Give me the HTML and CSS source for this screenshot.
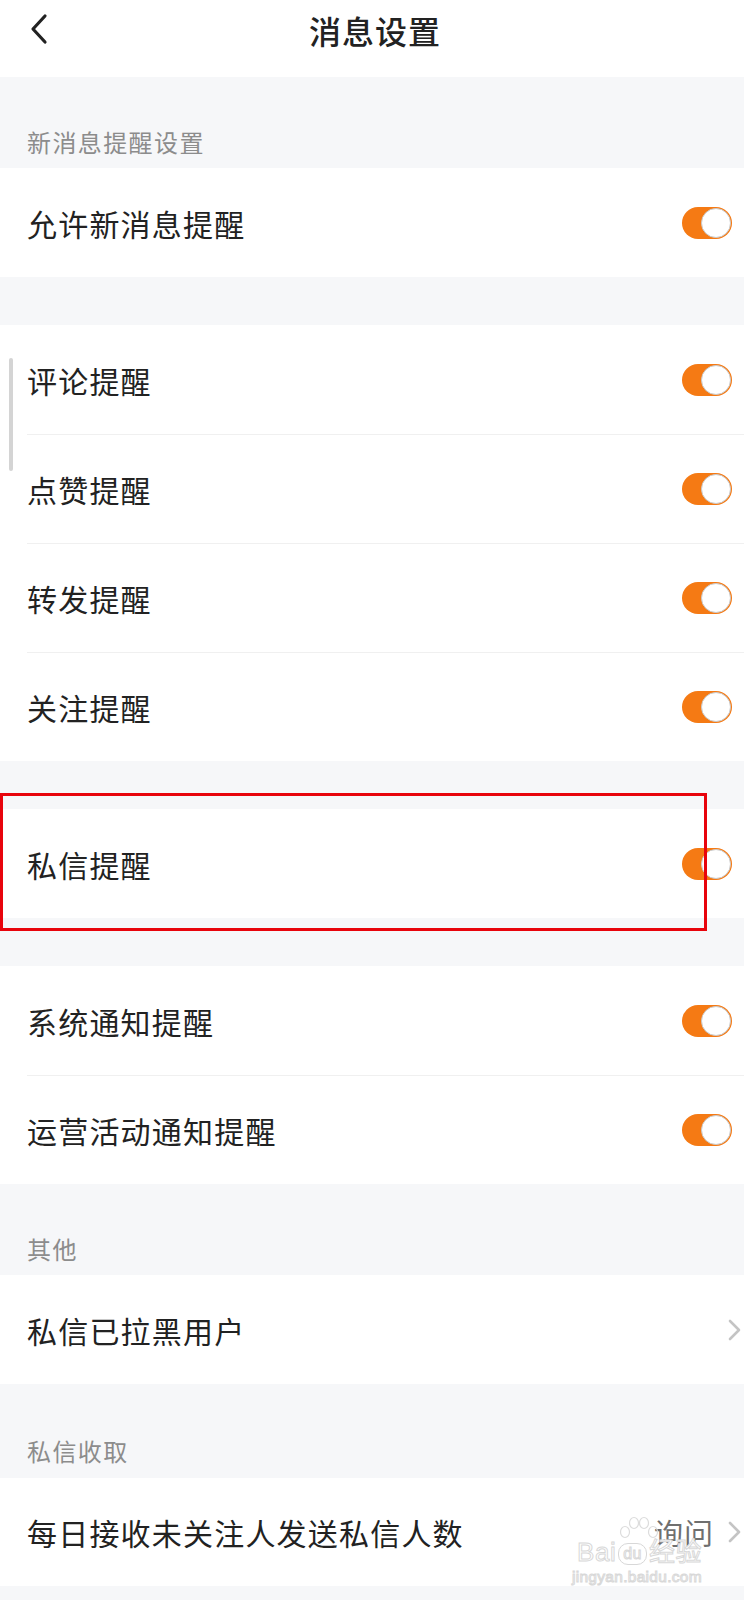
FILE: index.html
```html
<!DOCTYPE html>
<html lang="zh-CN">

<head>
    <meta charset="UTF-8">
    <meta name="viewport" content="width=device-width, initial-scale=1.0">
    <title>消息设置</title>
    <link rel="stylesheet" href="styles.css">
</head>

<body>

    <div class="topbar">
        <a class="back" href="#">
            <svg width="20" height="32" viewBox="0 0 20 32">
                <path d="M16 3 L4 16 L16 29" fill="none" stroke="#222" stroke-width="3.2" stroke-linecap="round" stroke-linejoin="round" />
            </svg>
        </a>
        <h1>消息设置</h1>
    </div>

    <div class="section-label">新消息提醒设置</div>
    <div class="group">
        <div class="row">
            <span>允许新消息提醒</span>
            <span class="switch on"></span>
        </div>
    </div>

    <div class="gap"></div>

    <div class="group">
        <div class="scroll-thumb"></div>
        <div class="row">
            <span>评论提醒</span>
            <span class="switch on"></span>
        </div>
        <div class="row">
            <span>点赞提醒</span>
            <span class="switch on"></span>
        </div>
        <div class="row">
            <span>转发提醒</span>
            <span class="switch on"></span>
        </div>
        <div class="row">
            <span>关注提醒</span>
            <span class="switch on"></span>
        </div>
    </div>

    <div class="gap"></div>

    <div class="group">
        <div class="row">
            <span>私信提醒</span>
            <span class="switch on"></span>
            <div class="mark-box"></div>
        </div>
    </div>

    <div class="gap"></div>

    <div class="group">
        <div class="row">
            <span>系统通知提醒</span>
            <span class="switch on"></span>
        </div>
        <div class="row">
            <span>运营活动通知提醒</span>
            <span class="switch on"></span>
        </div>
    </div>

    <div class="section-label">其他</div>
    <div class="group">
        <div class="row">
            <span>私信已拉黑用户</span>
            <svg class="arrow" width="13" height="22" viewBox="0 0 13 22">
                <path d="M2 2 L11 11 L2 20" fill="none" stroke="#c4c4c4" stroke-width="2.6" stroke-linecap="round" stroke-linejoin="round" />
            </svg>
        </div>
    </div>

    <div class="section-label last">私信收取</div>
    <div class="group">
        <div class="row tall">
            <span>每日接收未关注人发送私信人数</span>
            <span class="value">询问
                <svg class="arrow" width="13" height="22" viewBox="0 0 13 22">
                    <path d="M2 2 L11 11 L2 20" fill="none" stroke="#c4c4c4" stroke-width="2.6" stroke-linecap="round" stroke-linejoin="round" />
                </svg>
            </span>
        </div>

        <div class="watermark">
            <svg class="wm-paw" width="42" height="24" viewBox="0 0 42 24">
                <ellipse cx="7" cy="16" rx="4.5" ry="5.5" fill="none" stroke="#dcdcdc" stroke-width="1.2" />
                <ellipse cx="16" cy="7" rx="4.5" ry="5.5" fill="none" stroke="#dcdcdc" stroke-width="1.2" />
                <ellipse cx="26" cy="7" rx="4.5" ry="5.5" fill="none" stroke="#dcdcdc" stroke-width="1.2" />
                <ellipse cx="35" cy="16" rx="4.5" ry="5.5" fill="none" stroke="#dcdcdc" stroke-width="1.2" />
            </svg>
            <div class="wm-logo">Bai<span class="wm-du">du</span>经验</div>
            <div class="wm-url">jingyan.baidu.com</div>
        </div>
    </div>

</body>

</html>
```

FILE: styles.css
```css
body {
    margin: 0;
    width: 744px;
    background-color: #f6f7f9;
    font-family: "Noto Sans CJK SC", "Noto Sans", sans-serif;
    color: #222;
}

.topbar {
    height: 77px;
    background-color: white;
    display: flex;
    align-items: center;
    justify-content: center;
    position: relative;
}

.back {
    position: absolute;
    left: 29px;
    top: 13px;
}

h1 {
    margin: 0 0 18px 6px;
    font-size: 32px;
    font-weight: 500;
    letter-spacing: 1px;
}

.section-label {
    height: 91px;
    box-sizing: border-box;
    padding: 50px 0 0 27px;
    line-height: 30px;
    font-size: 24px;
    letter-spacing: 1.4px;
    color: #8c8c8c;
}

.section-label.last {
    height: 94px;
    padding-top: 52px;
}

.gap {
    height: 48px;
}

.group {
    background-color: white;
    position: relative;
}

.row {
    height: 109px;
    display: flex;
    align-items: center;
    justify-content: space-between;
    padding: 0 12px 0 27px;
    font-size: 30px;
    letter-spacing: 1.2px;
    position: relative;
}

.row.tall {
    height: 108px;
}

.row + .row::before {
    content: "";
    position: absolute;
    left: 27px;
    right: 0;
    top: 0;
    height: 1px;
    background-color: #f0f0f0;
}

.switch {
    width: 50px;
    height: 32px;
    border-radius: 16px;
    background-color: #cfcfcf;
    position: relative;
}

.switch::after {
    content: "";
    position: absolute;
    top: 1px;
    left: 1px;
    width: 28px;
    height: 28px;
    border-radius: 50%;
    background-color: white;
    border: 1px solid #c9c9c9;
}

.switch.on {
    background-color: #f57a14;
}

.switch.on::after {
    left: 19px;
}

.arrow {
    margin-right: -9px;
}

.value {
    display: flex;
    align-items: center;
    gap: 14px;
    font-size: 29px;
    color: #6f6f6f;
    letter-spacing: 1px;
}

.scroll-thumb {
    position: absolute;
    left: 9px;
    top: 33px;
    width: 4px;
    height: 113px;
    border-radius: 2px;
    background-color: #d4d4d4;
}

.mark-box {
    position: absolute;
    left: 0;
    right: 37px;
    top: -16px;
    bottom: -13px;
    border: 3px solid #e8040c;
}

.watermark {
    position: absolute;
    right: 42px;
    top: 60px;
    text-align: right;
    font-family: "Liberation Sans", "Noto Sans CJK SC", sans-serif;
    color: white;
    -webkit-text-stroke: 1px #d8d8d8;
}

.wm-paw {
    position: absolute;
    left: 46px;
    top: -22px;
}

.wm-logo {
    font-size: 26px;
    line-height: 28px;
    letter-spacing: 0.5px;
}

.wm-du {
    display: inline-block;
    vertical-align: middle;
    border: 1px solid #d8d8d8;
    border-radius: 10px;
    font-size: 16px;
    line-height: 16px;
    padding: 2px 4px;
    margin: 0 2px;
}

.wm-url {
    font-size: 15.5px;
    line-height: 22px;
    letter-spacing: 0.3px;
}
```
